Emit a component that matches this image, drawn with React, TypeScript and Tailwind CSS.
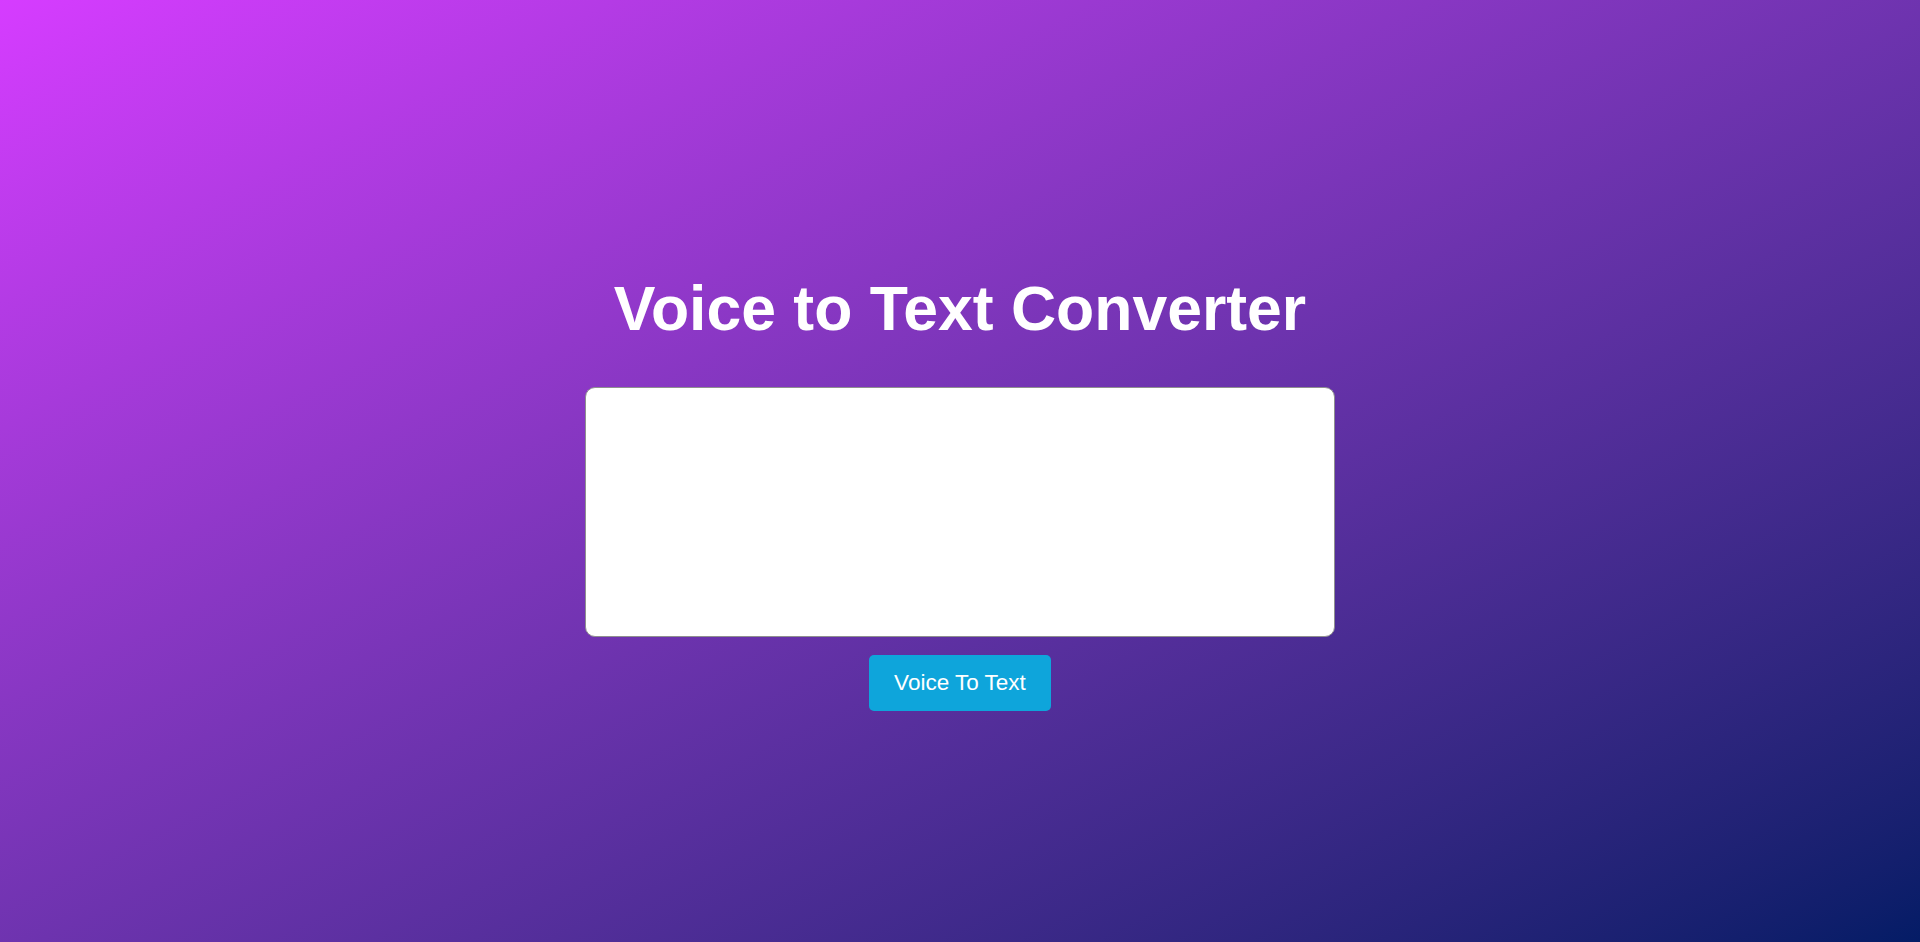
import React, { useState } from 'react';

const App: React.FC = () => {
  const [text, setText] = useState('');

  return (
    <div className="min-h-screen w-full bg-gradient-to-br from-[#d63cff] to-[#041c66] flex flex-col items-center pt-[277px] font-['Liberation_Sans',Arial,sans-serif]">
      <h1 className="text-[62.5px] leading-none font-bold text-white">Voice to Text Converter</h1>

      <textarea
        value={text}
        onChange={(e) => setText(e.target.value)}
        className="mt-[47px] w-[750px] h-[250px] bg-white border border-[#8f8f8f] rounded-[10px] p-2 resize-none outline-none text-base text-black"
      />

      <button className="mt-[18px] w-[182px] h-[56px] bg-[#0ea5db] text-white text-[22.5px] rounded-[5px]">
        Voice To Text
      </button>
    </div>
  );
};

export default App;
